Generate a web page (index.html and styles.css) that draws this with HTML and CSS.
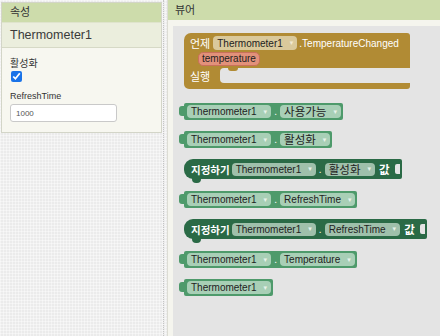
FILE: index.html
```html
<!DOCTYPE html>
<html lang="ko">
<head>
    <meta charset="UTF-8">
    <title>블록 편집기</title>
    <link rel="stylesheet" href="styles.css">
</head>
<body>
<div class="page">
    <aside class="props">
        <div class="props-head">속성</div>
        <div class="props-name">Thermometer1</div>
        <div class="props-body">
            <div class="prop-label ko">활성화</div>
            <input type="checkbox" class="prop-check" checked>
            <div class="prop-label prop-gap">RefreshTime</div>
            <input type="text" class="prop-input" value="1000">
        </div>
    </aside>
    <div class="splitter"></div>
    <main class="viewer">
        <div class="viewer-head">뷰어</div>
        <div class="viewer-body">
            <div class="workspace">
                <div class="event">
                    <div class="ev-row">
                        <span class="ev-label">언제</span>
                        <span class="field ev-field">Thermometer1<i class="arrow">▾</i></span>
                        <span class="ev-text">.TemperatureChanged</span>
                    </div>
                    <div class="ev-row">
                        <span class="param">temperature</span>
                    </div>
                    <div class="ev-row ev-do">
                        <span class="ev-label">실행</span>
                        <span class="slot"></span>
                    </div>
                </div>

                <div class="block get">
                    <span class="field">Thermometer1<i class="arrow">▾</i></span>
                    <span class="dot">.</span>
                    <span class="field"><span class="ko">사용가능</span><i class="arrow">▾</i></span>
                </div>
                <div class="block get">
                    <span class="field">Thermometer1<i class="arrow">▾</i></span>
                    <span class="dot">.</span>
                    <span class="field"><span class="ko">활성화</span><i class="arrow">▾</i></span>
                </div>
                <div class="block set">
                    <span class="set-label">지정하기</span>
                    <span class="field">Thermometer1<i class="arrow">▾</i></span>
                    <span class="dot">.</span>
                    <span class="field"><span class="ko">활성화</span><i class="arrow">▾</i></span>
                    <span class="set-label set-val">값</span>
                    <span class="socket"></span>
                </div>
                <div class="block get">
                    <span class="field">Thermometer1<i class="arrow">▾</i></span>
                    <span class="dot">.</span>
                    <span class="field">RefreshTime<i class="arrow">▾</i></span>
                </div>
                <div class="block set">
                    <span class="set-label">지정하기</span>
                    <span class="field">Thermometer1<i class="arrow">▾</i></span>
                    <span class="dot">.</span>
                    <span class="field">RefreshTime<i class="arrow">▾</i></span>
                    <span class="set-label set-val">값</span>
                    <span class="socket"></span>
                </div>
                <div class="block get">
                    <span class="field">Thermometer1<i class="arrow">▾</i></span>
                    <span class="dot">.</span>
                    <span class="field">Temperature<i class="arrow">▾</i></span>
                </div>
                <div class="block get">
                    <span class="field">Thermometer1<i class="arrow">▾</i></span>
                </div>
            </div>
        </div>
    </main>
</div>
</body>
</html>
```

FILE: styles.css
```css
body {
    margin: 0;
    font-family: "Liberation Sans", "Noto Sans CJK KR", sans-serif;
    background-color: #ebebeb;
    background-image:
        linear-gradient(90deg, rgba(255, 255, 255, 0.4) 1px, transparent 1px),
        linear-gradient(rgba(255, 255, 255, 0.4) 1px, transparent 1px);
    background-size: 3px 3px;
    color: #333;
}
.page {
    display: flex;
    height: 336px;
    overflow: hidden;
}
.ko {
    font-family: "Noto Sans CJK KR", sans-serif;
}

/* 속성 panel */
.props {
    box-sizing: border-box;
    width: 161px;
    height: 131px;
    margin: 2px 0 0 1px;
    border: 1px solid #d3d5c8;
    background-color: #f7f7f0;
}
.props-head {
    height: 19px;
    padding-left: 8px;
    line-height: 19px;
    font-size: 11px;
    background-color: #cddcab;
    border-bottom: 1px solid #dfe4cc;
}
.props-name {
    height: 24px;
    padding-left: 8px;
    line-height: 24px;
    font-size: 12.5px;
    color: #3a3a3a;
    background-color: #ebeedd;
    border-bottom: 1px solid #d6d9c6;
}
.props-body {
    padding: 9px 0 0 8px;
}
.prop-label {
    font-size: 9px;
    line-height: 12px;
}
.prop-label.ko {
    font-size: 10px;
}
.prop-gap {
    margin-top: 8px;
}
.prop-check {
    display: block;
    width: 11px;
    height: 11px;
    margin: 2px 0 0 1px;
    accent-color: #1a73e8;
}
.prop-input {
    box-sizing: border-box;
    display: block;
    width: 107px;
    height: 18px;
    margin-top: 2px;
    padding: 0 5px;
    font-family: "Liberation Sans", sans-serif;
    font-size: 8px;
    color: #555;
    border: 1px solid #c9c9c9;
    border-radius: 3px;
    background: #fff;
}

.splitter {
    width: 3px;
    margin-left: 1px;
    border-left: 1px dotted #c4c4c4;
}

/* 뷰어 */
.viewer {
    flex: 1;
    display: flex;
    flex-direction: column;
    background-color: #f5f5ee;
    border-left: 1px solid #dcdcd4;
}
.viewer-head {
    height: 20px;
    padding-left: 7px;
    line-height: 21px;
    font-size: 11px;
    background-color: #cddcab;
}
.viewer-body {
    flex: 1;
    padding: 6px 0 0 5px;
}
.workspace {
    height: 100%;
    display: flex;
    flex-direction: column;
    align-items: flex-start;
    gap: 11px;
    background-color: #e4e4e4;
}

/* blocks */
.field {
    display: inline-flex;
    align-items: center;
    height: 13px;
    padding: 0 4px 0 4px;
    font-size: 10px;
    color: #222;
    background-color: #a8cfb6;
    border-radius: 4px;
    white-space: nowrap;
}
.field .ko {
    font-size: 11.5px;
    line-height: 13px;
}
.arrow {
    font-style: normal;
    font-size: 7px;
    color: #e8f2ea;
    margin-left: 7px;
    font-family: "DejaVu Sans", sans-serif;
}
.dot {
    width: 9px;
    text-align: center;
    font-size: 10px;
    color: #fff;
}

.block {
    position: relative;
    display: flex;
    align-items: center;
    margin-left: 11px;
}
.get {
    height: 17px;
    padding: 0 2px 0 3px;
    background-color: #4e9a6b;
    border-radius: 2px;
}
.get::before {
    content: "";
    position: absolute;
    left: -5px;
    top: 3px;
    width: 6px;
    height: 10px;
    background-color: #4e9a6b;
    border-radius: 3px 0 0 3px;
}
.set {
    height: 20px;
    margin-bottom: 1px;
    padding: 0 0 0 7px;
    background-color: #2a6a46;
    border-radius: 9px 2px 2px 9px;
}
.set::after {
    content: "";
    position: absolute;
    left: 8px;
    bottom: -4px;
    width: 9px;
    height: 5px;
    background-color: #2a6a46;
    border-radius: 0 0 4px 4px;
}
.set .field {
    background-color: #9fc0ab;
}
.set-label {
    font-family: "Noto Sans CJK KR", sans-serif;
    font-size: 10.5px;
    font-weight: 700;
    color: #fff;
    margin-right: 2px;
}
.set-val {
    font-size: 11.5px;
    margin: 0 0 0 4px;
}
.socket {
    width: 5px;
    height: 10px;
    margin-left: 5px;
    margin-right: 2px;
    background-color: #e4e4e4;
    border-radius: 2px 0 0 2px;
}

.event {
    box-sizing: border-box;
    width: 226px;
    margin: 7px 0 3px 11px;
    padding: 3px 0 6px 6px;
    background-color: #b18b34;
    border-radius: 7px 3px 3px 5px;
}
.ev-row {
    display: flex;
    align-items: center;
    height: 14px;
}
.ev-row + .ev-row {
    margin-top: 2px;
}
.ev-label {
    font-family: "Noto Sans CJK KR", sans-serif;
    font-size: 11px;
    color: #fff;
    margin-right: 3px;
}
.ev-field {
    height: 14px;
    background-color: #dac99b;
}
.ev-field .arrow {
    color: #f3ead2;
}
.ev-text {
    margin-left: 2px;
    font-size: 10px;
    color: #fff;
}
.param {
    box-sizing: border-box;
    height: 14px;
    margin-left: 8px;
    padding: 0 3px;
    line-height: 12px;
    font-size: 10px;
    color: #222;
    background-color: #e2917a;
    border: 1px solid #c9705a;
    border-radius: 5px;
}
.ev-do {
    height: 15px;
}
.slot {
    position: relative;
    flex: 1;
    height: 15px;
    margin-left: 7px;
    background-color: #e4e4e4;
    border-radius: 4px 0 0 4px;
}
.slot::before {
    content: "";
    position: absolute;
    left: 8px;
    top: 0;
    width: 10px;
    height: 3px;
    background-color: #b18b34;
    border-radius: 0 0 4px 4px;
}
```
